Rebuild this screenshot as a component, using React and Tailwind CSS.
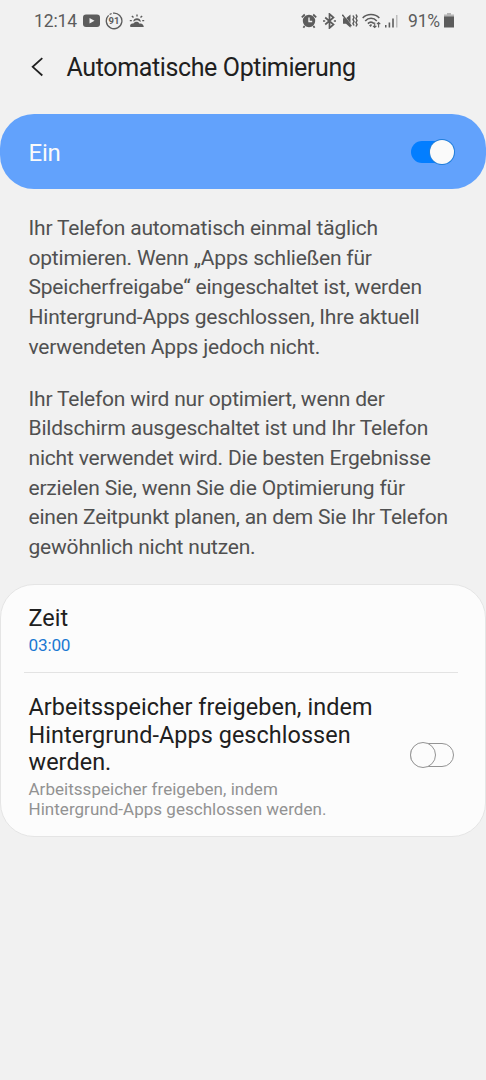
const intro = [
  ['Ihr Telefon automatisch einmal täglich', 'optimieren. Wenn „Apps schließen für', 'Speicherfreigabe“ eingeschaltet ist, werden', 'Hintergrund-Apps geschlossen, Ihre aktuell', 'verwendeten Apps jedoch nicht.'],
  ['Ihr Telefon wird nur optimiert, wenn der', 'Bildschirm ausgeschaltet ist und Ihr Telefon', 'nicht verwendet wird. Die besten Ergebnisse', 'erzielen Sie, wenn Sie die Optimierung für', 'einen Zeitpunkt planen, an dem Sie Ihr Telefon', 'gewöhnlich nicht nutzen.'],
]

function Lines({ lines }) {
  return lines.map((line) => (
    <span key={line} className="block whitespace-nowrap">{line}</span>
  ))
}

function StatusBar() {
  return (
    <header className="flex h-[42px] items-center justify-between pl-[34px] pr-8 text-[#5c5c5c]">
      <div className="flex items-center">
        <span className="w-[49px] whitespace-nowrap text-[17.5px] leading-5 tracking-[-0.1px]">12:14</span>
        <svg className="h-[14px] w-[17px]" viewBox="0 0 17 14">
          <rect y=".5" width="17" height="12.5" rx="3" fill="currentColor" />
          <path d="M6.5 4v5.6l5-2.8z" fill="#f1f1f1" />
        </svg>
        <span className="relative ml-[5px] flex h-[18px] w-[18px] items-center justify-center">
          <svg className="absolute inset-0 h-full w-full" viewBox="0 0 18 18" fill="none" stroke="currentColor" strokeWidth="1.3">
            <path d="M8 1.2A7.8 7.8 0 1 1 3.6 3.4M4.6 2.5l2-1" />
          </svg>
          <span className="text-[9.5px] font-bold leading-none">91</span>
        </span>
        <svg className="ml-[6px] h-4 w-4" viewBox="0 0 16 16" fill="currentColor">
          <path d="M7.3 1.5h1.4v2H7.3zM2.4 3.5l1-1L5 4.1l-1 .9zM12.6 2.5l1 1L12 5l-1-.9zM.8 7h2v1.3h-2zM13.2 7h2v1.3h-2z" />
          <path d="M4.2 8.3a3.9 3.9 0 0 1 7.6 0l-.6.7c-1.4-2.2-4.6-2.4-6.2-.4z" />
          <path d="M1.4 14a2.4 2.4 0 0 1 3-3.4C5.7 8.2 9.4 8.3 10.5 10.7c2.2-.7 4 .9 4.3 3.3z" />
        </svg>
      </div>
      <div className="flex items-center">
        <svg className="h-4 w-4" viewBox="0 0 16 16">
          <circle cx="8" cy="8" r="6.2" fill="currentColor" />
          <path d="M3.6 13l-1.2 1.7M12.4 13l1.2 1.7M.8 4.3L3.8 1.5M15.2 4.3l-3-2.8" fill="none" stroke="currentColor" strokeWidth="1.8" />
          <path d="M8 4.5v4h3.2" fill="none" stroke="#f1f1f1" strokeWidth="1.4" />
        </svg>
        <svg className="ml-[6px] h-4 w-[13px]" viewBox="0 0 13 16" fill="none" stroke="currentColor" strokeWidth="1.7">
          <path d="M2.2 4.5l8.3 7L6.5 15V1l4 3.5-8.3 7" />
          <path d="M0 8h2.2M10.8 8H13" />
        </svg>
        <svg className="ml-[6px] h-4 w-[16px]" viewBox="0 0 16 16">
          <path d="M1 5.3h3L8.5 1.5v13.2L4 10.8H1z" fill="currentColor" />
          <path d="M1.2 1.2l9 11.6" stroke="#f1f1f1" strokeWidth=".6" />
          <path d="M.3 1.7l9 11.6" stroke="currentColor" strokeWidth="1.5" />
          <path d="M11 2.5l1 2-1 2 1 2-1 2 1 2M14 1.5l1 2-1 2 1 2-1 2 1 2-1 2" fill="none" stroke="currentColor" strokeWidth="1.5" />
        </svg>
        <svg className="ml-[4px] h-4 w-[19px]" viewBox="0 0 19 16" fill="none" stroke="currentColor" strokeWidth="1.6">
          <path d="M.7 5C5 .4 13 .4 17.3 5M3.2 8c3.3-3.6 8.4-3.6 11.6 0M5.9 10.6c2-2 4.3-1.9 6 0" />
          <path d="M7 12.4l2-1.3 1 1-1.3 2z" fill="currentColor" stroke="none" />
          <path d="M12.7 9.5v5M11 12.8l1.7 1.7 1.7-1.7M16.6 14.5v-5M14.9 11.2l1.7-1.7 1.7 1.7" strokeWidth="1.1" />
        </svg>
        <svg className="ml-[4px] h-4 w-[13px]" viewBox="0 0 13 16" fill="currentColor">
          <path d="M0 12h1.5v2.5H0zM3.6 9.5h1.6v5H3.6zM7.2 5.5h1.6v9H7.2z" />
          <path d="M11 2h1.5v12.5H11z" opacity=".35" />
        </svg>
        <span className="ml-[10px] w-[36px] whitespace-nowrap text-[17.5px] leading-5 tracking-[-0.2px]">91%</span>
        <svg className="h-4 w-[10px]" viewBox="0 0 10 16" fill="currentColor">
          <path d="M3 0h4v1.5h3V4H0V1.5h3z" opacity=".4" />
          <path d="M0 3.5h10v11H0z" />
        </svg>
      </div>
    </header>
  )
}

export default function App() {
  return (
    <main className="h-[1080px] w-[486px] overflow-hidden bg-[#f1f1f1] font-[Roboto,sans-serif]">
      <StatusBar />
      <div className="flex h-[72px] items-start pl-[31px] pt-[10px] text-[#202020]">
        <svg className="mt-[5px] h-5 w-3" viewBox="0 0 12 20" fill="none" stroke="currentColor" strokeWidth="1.8">
          <path d="M11.3 1.2L1.7 9.8l9.6 8.7" />
        </svg>
        <h1 className="ml-[23.5px] whitespace-nowrap text-[25px] leading-8 tracking-[-0.37px]">Automatische Optimierung</h1>
      </div>

      <section className="flex h-[75px] items-center justify-between rounded-[34px] bg-[#62a2fc] pl-[28.5px] pr-8 text-[#fafafa]">
        <span className="pt-[2px] text-[24px] leading-8 tracking-[-0.2px]">Ein</span>
        <button role="switch" aria-checked="true" aria-label="Ein" className="flex h-[22px] w-[43px] items-center justify-end rounded-full bg-[#037eff]">
          <span className="h-6 w-6 shrink-0 rounded-full bg-[#fafafa] ring-1 ring-[#207edb]" />
        </button>
      </section>

      <section className="space-y-[22px] pl-[28.5px] pt-[25px] text-[21px] leading-[29.7px] tracking-[-0.2px] text-[#505050]">
        <p><Lines lines={intro[0]} /></p>
        <p><Lines lines={intro[1]} /></p>
      </section>

      <section className="mt-[21.3px] h-[253px] rounded-[34px] border border-[#e5e5e5] bg-[#fcfcfc] px-[27.5px] pt-[19px] text-[#202020]">
        <h2 className="text-[23.4px] leading-[28px] tracking-[0.07px]">Zeit</h2>
        <p className="text-[17.2px] leading-[26px] tracking-[-0.2px] text-[#1a78d2]">03:00</p>
        <hr className="-ml-[5px] mt-[14px] border-t-[1.5px] border-[#e3e3e3]" />
        <div className="mt-[21px] flex items-center justify-between">
          <div>
            <h2 className="text-[23.4px] leading-[27.6px] tracking-[0.07px]">
              <Lines lines={['Arbeitsspeicher freigeben, indem', 'Hintergrund-Apps geschlossen', 'werden.']} />
            </h2>
            <p className="mt-[2px] text-[17px] leading-[20px] tracking-[0.03px] text-[#929292]">
              <Lines lines={['Arbeitsspeicher freigeben, indem', 'Hintergrund-Apps geschlossen werden.']} />
            </p>
          </div>
          <button role="switch" aria-checked="false" aria-label="Arbeitsspeicher freigeben" className="mb-[3px] mr-[3.5px] flex h-[24px] w-[44px] shrink-0 items-center rounded-full border border-[#949494]">
            <span className="-ml-[1px] h-[26px] w-[26px] shrink-0 rounded-full border border-[#949494] bg-[#fcfcfc]" />
          </button>
        </div>
      </section>
    </main>
  )
}
